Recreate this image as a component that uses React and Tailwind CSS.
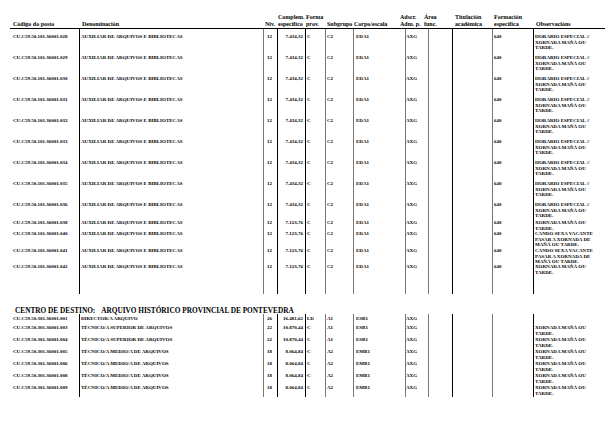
import React from "react"

// column layout shared by header and both blocks (x from 10px to 605px)
const COLS = [
  "w-[69px] pl-[3px]",
  "w-[184px] pl-[1px] border-l border-black",
  "w-[14px] pl-[3px] border-l border-[#777]",
  "w-[28px] pr-[2px] text-right border-l border-black",
  "w-[20px] pl-[1px] border-l border-black",
  "w-[28px] pl-[1px] border-l border-[#777]",
  "w-[52px] pl-[2px] border-l border-[#777]",
  "w-[23px] border-l border-[#777]",
  "w-[24px] border-l border-[#777]",
  "w-[40px] border-l border-black",
  "w-[41px] pl-[1px] border-l border-[#777]",
  "w-[72px] pl-[1px] border-l border-black",
]

const HEAD = [
  { cls: "w-[69px] pl-[3px]", lines: ["Código do posto"] },
  { cls: "w-[184px] pl-[3px]", lines: ["Denominación"] },
  { cls: "w-[14px] pl-[2px]", lines: ["Niv."] },
  { cls: "w-[28px] pl-[1px]", lines: ["Complem.", "específico"] },
  { cls: "w-[20px] pl-[1px]", lines: ["Forma", "prov."] },
  { cls: "w-[28px] pl-[2px]", lines: ["Subgrupo"] },
  { cls: "w-[52px] pl-[1px]", lines: ["Corpo/escala"] },
  { cls: "w-[23px] ml-[-5px] mr-[5px]", lines: ["Adscr.", "Adm. p."] },
  { cls: "w-[24px] ml-[-4px] mr-[4px]", lines: ["Área", "func."] },
  { cls: "w-[40px] pl-[3px]", lines: ["Titulación", "académica"] },
  { cls: "w-[41px] pl-[2px]", lines: ["Formación", "específica"] },
  { cls: "w-[72px] pl-[3px]", lines: ["Observacións"] },
]

const OBS_H = ["HORARIO ESPECIAL //", "XORNADA MAÑÁ OU", "TARDE."]
const OBS_X = ["XORNADA MAÑÁ OU", "TARDE."]
const OBS_C = ["CANDO SEXA VACANTE", "PASAR A XORNADA DE", "MAÑÁ OU TARDE."]

const AUX = "AUXILIAR DE ARQUIVOS E BIBLIOTECAS"

const BLOCK1 = [
  { n: "028", esp: "7.434,32", obs: OBS_H, h: "h-[21px]", pt: "pt-[5px]" },
  { n: "029", esp: "7.434,32", obs: OBS_H, h: "h-[21px]", pt: "pt-[5px]" },
  { n: "030", esp: "7.434,32", obs: OBS_H, h: "h-[21px]", pt: "pt-[5px]" },
  { n: "031", esp: "7.434,32", obs: OBS_H, h: "h-[21px]", pt: "pt-[5px]" },
  { n: "032", esp: "7.434,32", obs: OBS_H, h: "h-[21px]", pt: "pt-[5px]" },
  { n: "033", esp: "7.434,32", obs: OBS_H, h: "h-[21px]", pt: "pt-[5px]" },
  { n: "034", esp: "7.434,32", obs: OBS_H, h: "h-[21px]", pt: "pt-[5px]" },
  { n: "035", esp: "7.434,32", obs: OBS_H, h: "h-[21px]", pt: "pt-[5px]" },
  { n: "036", esp: "7.434,32", obs: OBS_H, h: "h-[21px]", pt: "pt-[5px]" },
  { n: "038", esp: "7.123,76", obs: OBS_X, h: "h-[12px]", pt: "pt-[2px]" },
  { n: "040", esp: "7.123,76", obs: OBS_C, h: "h-[17px]", pt: "pt-[1px]" },
  { n: "041", esp: "7.123,76", obs: OBS_C, h: "h-[16px]", pt: "pt-[1px]" },
  { n: "042", esp: "7.123,76", obs: OBS_X, h: "h-[31px]", pt: "pt-[1px]" },
]

const TS = "TÉCNICO/A SUPERIOR DE ARQUIVOS"
const TM = "TÉCNICO/A MEDIO/A DE ARQUIVOS"

const BLOCK2 = [
  { n: "001", den: "DIRECTOR/A ARQUIVO", niv: "26", esp: "16.481,62", fp: "LD", sub: "A1", corpo: "ESB1", obs: [], h: "h-[9px]", pt: "pt-[2px]" },
  { n: "003", den: TS, niv: "22", esp: "10.870,44", fp: "C", sub: "A1", corpo: "ESB1", obs: OBS_X, h: "h-[12px]", pt: "pt-[2px]" },
  { n: "004", den: TS, niv: "22", esp: "10.870,44", fp: "C", sub: "A1", corpo: "ESB1", obs: OBS_X, h: "h-[12px]", pt: "pt-[2px]" },
  { n: "005", den: TM, niv: "18", esp: "8.064,84", fp: "C", sub: "A2", corpo: "EMB1", obs: OBS_X, h: "h-[12px]", pt: "pt-[2px]" },
  { n: "006", den: TM, niv: "18", esp: "8.064,84", fp: "C", sub: "A2", corpo: "EMB1", obs: OBS_X, h: "h-[12px]", pt: "pt-[2px]" },
  { n: "008", den: TM, niv: "18", esp: "8.064,84", fp: "C", sub: "A2", corpo: "EMB1", obs: OBS_X, h: "h-[12px]", pt: "pt-[2px]" },
  { n: "009", den: TM, niv: "18", esp: "8.064,84", fp: "C", sub: "A2", corpo: "EMB1", obs: OBS_X, h: "h-[14px]", pt: "pt-[2px]" },
]

function Row({ cells, h, pt }) {
  return (
    <div className={`flex ${h}`}>
      {COLS.map((c, i) => (
        <div key={i} className={`shrink-0 whitespace-nowrap ${c} ${pt}`}>
          {(cells[i] || []).map((l, j) => (
            <div key={j}>{l}</div>
          ))}
        </div>
      ))}
    </div>
  )
}

export default function App() {
  return (
    <div className="w-[615px] h-[439px] bg-white text-black font-['Liberation_Serif',serif] font-bold overflow-hidden">
      <div className="pl-[10px]">
        {/* Header */}
        <div className="flex items-end h-[29px] w-[595px] border-b border-black pb-[1px] text-[6px] leading-[6.5px]">
          {HEAD.map((c, i) => (
            <div key={i} className={`shrink-0 whitespace-nowrap ${c.cls}`}>
              {c.lines.map((l, j) => (
                <div key={j}>{l}</div>
              ))}
            </div>
          ))}
        </div>

        {/* Block 1 */}
        <div className="text-[5px] leading-[5.5px]">
          {BLOCK1.map((r) => (
            <Row
              key={r.n}
              h={r.h}
              pt={r.pt}
              cells={[
                [`CU.C59.50.101.36001.${r.n}`],
                [AUX],
                ["12"],
                [r.esp],
                ["C"],
                ["C2"],
                ["EDA1"],
                ["AXG"],
                [],
                [],
                ["640"],
                r.obs,
              ]}
            />
          ))}
        </div>

        {/* Centro de destino */}
        <div className="flex h-[20px] pt-[13px] pl-[5px] text-[7.3px] leading-[8px]">
          <span>CENTRO DE DESTINO:</span>
          <span className="ml-[6px]">ARQUIVO HISTÓRICO PROVINCIAL DE PONTEVEDRA</span>
        </div>

        {/* Block 2 */}
        <div className="text-[5px] leading-[5.5px]">
          {BLOCK2.map((r) => (
            <Row
              key={r.n}
              h={r.h}
              pt={r.pt}
              cells={[
                [`CU.C59.50.301.36001.${r.n}`],
                [r.den],
                [r.niv],
                [r.esp],
                [r.fp],
                [r.sub],
                [r.corpo],
                ["AXG"],
                [],
                [],
                [],
                r.obs,
              ]}
            />
          ))}
        </div>
      </div>
    </div>
  )
}
